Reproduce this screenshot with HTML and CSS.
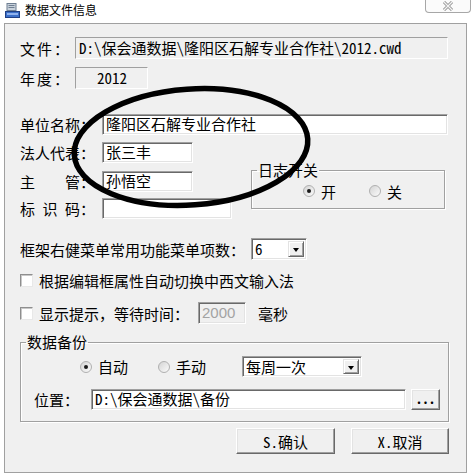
FILE: index.html
```html
<!DOCTYPE html>
<html lang="zh-CN">
<head>
    <meta charset="UTF-8">
    <title>数据文件信息</title>
    <link rel="stylesheet" href="styles.css">
</head>
<body>
    <div class="titlebar">
        <svg class="app-icon" width="15" height="15" viewBox="0 0 15 15">
            <rect x="2" y="0.5" width="9" height="7" fill="#c9d2dc" stroke="#6f7f92"/>
            <rect x="3.5" y="2" width="6" height="1" fill="#6f7f92"/>
            <rect x="3.5" y="4" width="6" height="1" fill="#6f7f92"/>
            <rect x="0.5" y="8.5" width="14" height="6" fill="#3b6fc9" stroke="#1f3f84"/>
            <rect x="2" y="10" width="11" height="2" fill="#8fb2ee"/>
        </svg>
        <span class="title">数据文件信息</span>
        <div class="close-btn">
            <svg width="12" height="10" viewBox="0 0 12 10">
                <path d="M2 1 L10 9 M10 1 L2 9" stroke="#8c8c8c" stroke-width="3" fill="none"/>
                <path d="M2 1 L10 9 M10 1 L2 9" stroke="#f4f4f4" stroke-width="1.4" fill="none"/>
            </svg>
        </div>
    </div>

    <div class="panel">
        <div class="row row-file">
            <span class="label label-short">文件：</span>
            <div class="field readonly file-path">D:\保会通数据\隆阳区石解专业合作社\2012.cwd</div>
        </div>
        <div class="row row-year">
            <span class="label label-short">年度：</span>
            <div class="field readonly year">2012</div>
        </div>
        <div class="row row-unit">
            <span class="label">单位名称：</span>
            <div class="field unit-name">隆阳区石解专业合作社</div>
        </div>

        <div class="mid">
            <div class="mid-left">
                <div class="row row-small">
                    <span class="label">法人代表：</span>
                    <div class="field w-short">张三丰</div>
                </div>
                <div class="row row-small gap8">
                    <span class="label">主&emsp;&emsp;管：</span>
                    <div class="field w-short">孙悟空</div>
                </div>
                <div class="row row-small gap6">
                    <span class="label">标 识 码：</span>
                    <div class="field w-code"></div>
                </div>
            </div>
            <fieldset class="group log-group">
                <legend>日志开关</legend>
                <div class="radio-row">
                    <span class="radio on"></span><span class="radio-text">开</span>
                    <span class="radio off-gap"></span><span class="radio-text">关</span>
                </div>
            </fieldset>
        </div>

        <div class="row row-menu">
            <span class="label menu-label">框架右健菜单常用功能菜单项数：</span>
            <div class="combo menu-count">
                <span class="combo-text">6</span>
                <span class="combo-arrow"></span>
            </div>
        </div>
        <div class="row row-check1">
            <span class="checkbox"></span>
            <span class="check-text">根据编辑框属性自动切换中西文输入法</span>
        </div>
        <div class="row row-check2">
            <span class="checkbox"></span>
            <span class="check-text">显示提示，等待时间：</span>
            <div class="field disabled wait-time">2000</div>
            <span class="unit-text">毫秒</span>
        </div>

        <fieldset class="group backup-group">
            <legend>数据备份</legend>
            <div class="row backup-mode">
                <span class="radio on"></span><span class="radio-text">自动</span>
                <span class="radio manual"></span><span class="radio-text">手动</span>
                <div class="combo period">
                    <span class="combo-text">每周一次</span>
                    <span class="combo-arrow"></span>
                </div>
            </div>
            <div class="row backup-path">
                <span class="label path-label">位置：</span>
                <div class="field path-field">D:\保会通数据\备份</div>
                <div class="btn browse">...</div>
            </div>
        </fieldset>

        <div class="row actions">
            <div class="btn ok">S.确认</div>
            <div class="btn cancel">X.取消</div>
        </div>
    </div>

    <!-- hand-drawn mark around the unit fields -->
    <svg class="mark" width="476" height="474" viewBox="0 0 476 474">
        <ellipse cx="191" cy="147" rx="117" ry="58" transform="rotate(-4 191 147)" fill="none" stroke="#000" stroke-width="5.5"/>
    </svg>
</body>
</html>
```

FILE: styles.css
```css
body {
    margin: 0;
    width: 476px;
    height: 474px;
    position: relative;
    overflow: hidden;
    background: #fff;
    color: #000;
    font-family: "Noto Sans Mono CJK SC", "Noto Sans CJK SC", sans-serif;
    font-size: 15px;
}
.titlebar {
    display: flex;
    align-items: flex-start;
    height: 23px;
}
.app-icon {
    margin: 3px 0 0 5px;
}
.title {
    margin-left: 5px;
    font-size: 12px;
    line-height: 20px;
}
.close-btn {
    margin-left: auto;
    margin-right: 5px;
    width: 46px;
    height: 13px;
    box-sizing: border-box;
    border: 1px solid #a7a7a7;
    border-top: none;
    border-radius: 0 0 4px 4px;
    background: #fbfbfb;
    display: flex;
    justify-content: center;
    align-items: center;
}
.panel {
    margin-left: 4px;
    width: 463px;
    height: 450px;
    box-sizing: border-box;
    border: 1px solid #a0a0a0;
    background: #f0f0f0;
    padding: 13px 17px 0 15px;
}
.row {
    display: flex;
    align-items: center;
}
.label {
    width: 82px;
    flex-shrink: 0;
    white-space: nowrap;
}
.label-short {
    width: 55px;
    letter-spacing: 2px;
}
.field {
    box-sizing: border-box;
    height: 21px;
    line-height: 17px;
    padding: 0 2px 0 3px;
    background: #fff;
    border: 1px solid;
    border-color: #a0a0a0 #fff #fff #a0a0a0;
    box-shadow: inset 1px 1px 0 #696969, inset -1px -1px 0 #e3e3e3;
    white-space: nowrap;
    overflow: hidden;
}
.field.readonly {
    height: 22px;
    line-height: 20px;
    background: #f0f0f0;
    box-shadow: none;
}
.row-file .file-path {
    width: 373px;
}
.row-year {
    margin-top: 8px;
}
.year {
    width: 73px;
    text-align: center;
}
.row-unit {
    margin-top: 25px;
}
.unit-name {
    width: 346px;
}
.mid {
    display: flex;
    align-items: flex-start;
    margin-top: 7px;
}
.mid-left {
    width: 212px;
}
.gap8 {
    margin-top: 8px;
}
.gap6 {
    margin-top: 6px;
}
.w-short {
    width: 91px;
}
.w-code {
    width: 130px;
}
.group {
    margin: 0;
    padding: 0;
    min-inline-size: 0;
    border: 1px solid #a0a0a0;
    box-shadow: inset 1px 1px 0 #fff, 1px 1px 0 #fff;
}
.group legend {
    margin-left: 5px;
    padding: 0 1px;
    line-height: 16px;
}
.log-group {
    margin: 20px 0 0 19px;
    width: 194px;
    box-sizing: border-box;
    padding: 5px 0 9px 0;
}
.radio-row {
    display: flex;
    align-items: center;
    height: 16px;
    margin-left: 51px;
}
.radio {
    width: 12px;
    height: 12px;
    box-sizing: border-box;
    border-radius: 50%;
    border: 1px solid #b0b0b0;
    background: linear-gradient(135deg, #d4d4d4, #fbfbfb);
    position: relative;
    flex-shrink: 0;
}
.radio.on::after {
    content: "";
    position: absolute;
    left: 3px;
    top: 3px;
    width: 4px;
    height: 4px;
    border-radius: 50%;
    background: #1a1a1a;
}
.radio-text {
    margin-left: 6px;
}
.off-gap {
    margin-left: 33px;
}
.row-menu {
    margin-top: 19px;
}
.menu-label {
    width: 231px;
}
.combo {
    box-sizing: border-box;
    height: 22px;
    display: flex;
    align-items: stretch;
    background: #fff;
    border: 1px solid;
    border-color: #a0a0a0 #fff #fff #a0a0a0;
    box-shadow: inset 1px 1px 0 #696969, inset -1px -1px 0 #e3e3e3;
    padding: 2px;
}
.combo-text {
    flex: 1;
    line-height: 16px;
    padding-left: 1px;
}
.combo-arrow {
    width: 16px;
    box-sizing: border-box;
    background: #f0f0f0;
    border: 1px solid;
    border-color: #e3e3e3 #696969 #696969 #e3e3e3;
    box-shadow: inset 1px 1px 0 #fff, inset -1px -1px 0 #a0a0a0;
    position: relative;
}
.combo-arrow::after {
    content: "";
    position: absolute;
    left: 4px;
    top: 6px;
    border-left: 3.5px solid transparent;
    border-right: 3.5px solid transparent;
    border-top: 4px solid #000;
}
.menu-count {
    width: 56px;
}
.checkbox {
    width: 13px;
    height: 13px;
    box-sizing: border-box;
    background: #fff;
    border: 1px solid;
    border-color: #8e8e8e #e8e8e8 #e8e8e8 #8e8e8e;
    box-shadow: inset 1px 1px 0 #c8c8c8;
    flex-shrink: 0;
}
.check-text {
    margin-left: 6px;
}
.row-check1 {
    margin-top: 12px;
    height: 16px;
}
.row-check2 {
    margin-top: 14px;
    height: 22px;
}
.wait-time {
    margin-left: 9px;
    width: 48px;
    height: 22px;
    line-height: 20px;
    background: #f0f0f0;
    color: #a3a3a3;
    font-family: "Liberation Sans", sans-serif;
    font-size: 15px;
}
.unit-text {
    margin-left: 12px;
}
.backup-group {
    margin-top: 10px;
    padding: 0 0 11px 0;
}
.backup-mode {
    margin-top: 6px;
    height: 21px;
    padding-left: 59px;
}
.manual {
    margin-left: 30px;
}
.period {
    margin-left: 36px;
    width: 120px;
    height: 21px;
}
.backup-path {
    margin-top: 12px;
    height: 21px;
}
.path-label {
    margin-left: 13px;
    width: 57px;
}
.path-field {
    width: 315px;
}
.btn {
    box-sizing: border-box;
    background: #f0f0f0;
    border: 1px solid;
    border-color: #fff #696969 #696969 #fff;
    box-shadow: inset -1px -1px 0 #a0a0a0, inset 1px 1px 0 #e3e3e3;
    display: flex;
    justify-content: center;
    align-items: center;
    white-space: nowrap;
}
.browse {
    margin-left: 5px;
    width: 29px;
    height: 21px;
    font-size: 13px;
    font-weight: bold;
    line-height: 1;
    padding-bottom: 2px;
}
.actions {
    margin-top: 6px;
    justify-content: flex-end;
    gap: 16px;
}
.ok {
    width: 99px;
    height: 26px;
}
.cancel {
    width: 98px;
    height: 26px;
}
.mark {
    position: absolute;
    left: 0;
    top: 0;
    pointer-events: none;
}
```
